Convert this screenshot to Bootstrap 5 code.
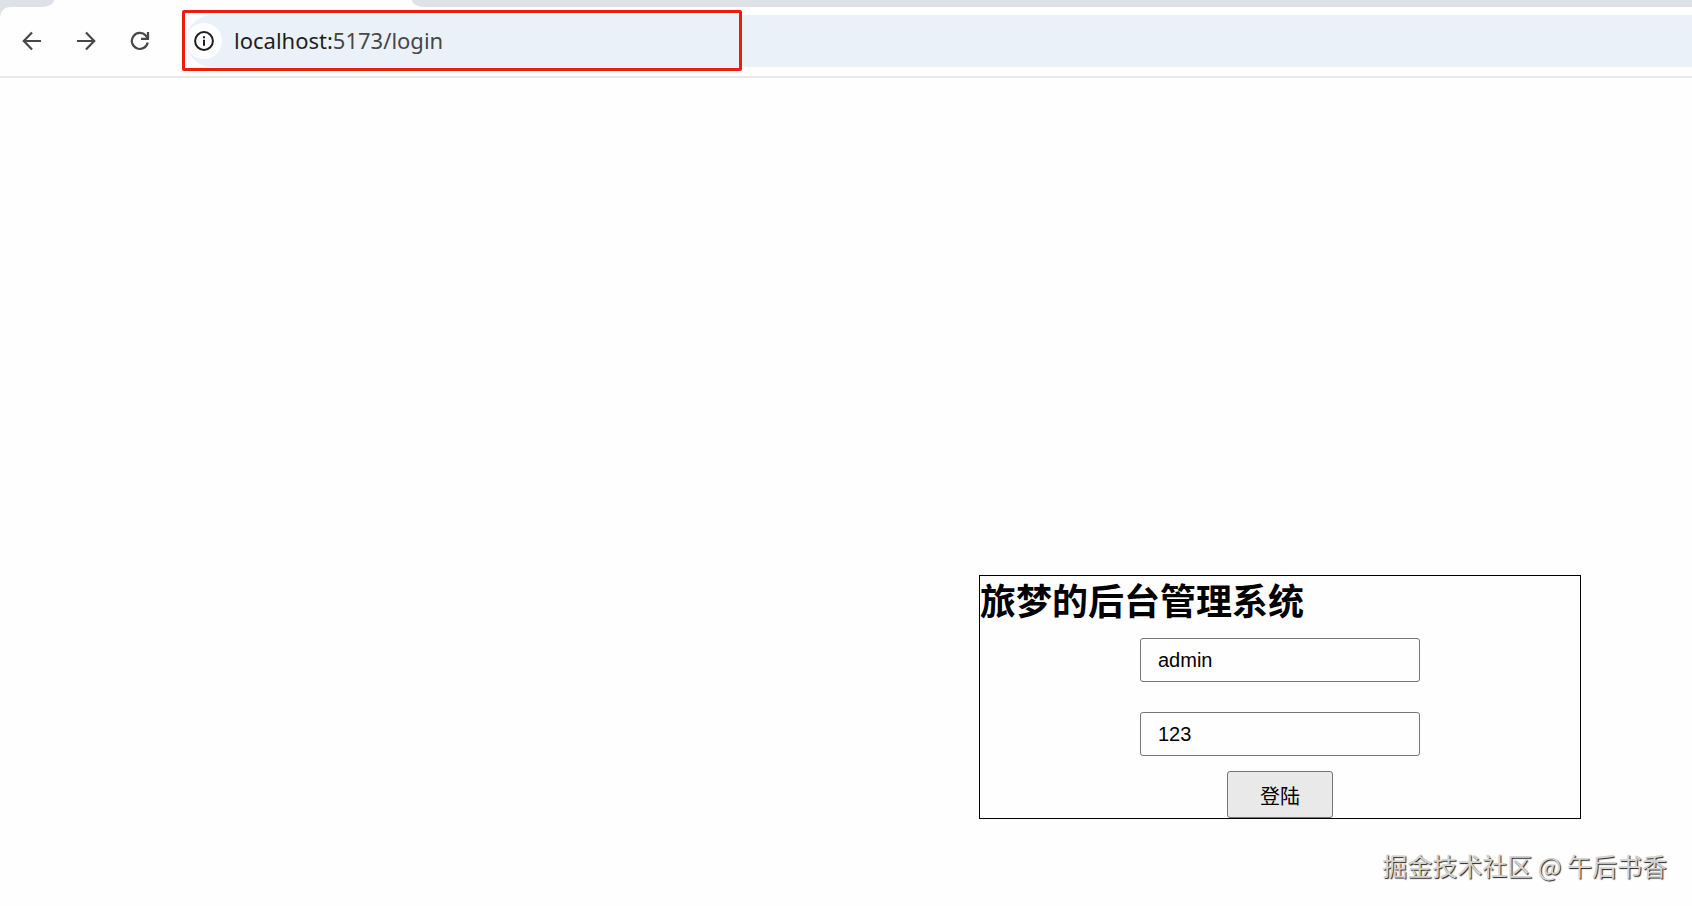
<!DOCTYPE html>
<html lang="zh-CN">
<head>
<meta charset="utf-8">
<meta name="viewport" content="width=device-width, initial-scale=1">
<title>login</title>
<link href="https://cdn.jsdelivr.net/npm/bootstrap@5.3.0/dist/css/bootstrap.min.css" rel="stylesheet">
<style>
  body { background: #fefefe; color: #000; font-family: "Liberation Sans", "Noto Sans CJK SC", sans-serif; }
  /* browser frame */
  .tab-strip { height: 7px; background: #fefefe; }
  .tab-rest { background: #dde1e8; }
  .tab-rest-start { width: 54px; border-bottom-right-radius: 12px 7px; }
  .tab-rest-end { border-bottom-left-radius: 12px 7px; }
  .tab-active { width: 358px; }
  .frame-top { background: #dde1e8; }
  .toolbar { height: 71px; padding-bottom: 1px; background: #fefefe; border-bottom: 2px solid #e8e9eb; border-top-left-radius: 10px; }
  .nav-icons { width: 182px; padding-left: 16px; gap: 22px; }
  .nav-icons .btn { width: 32px; height: 32px; color: #474747; }
  .address { height: 52px; background: #ebf1f9; border-radius: 26px 0 0 26px; margin-left: 4px; }
  .highlight { width: 560px; height: 61px; left: 182px; top: 3px; border: 3px solid #ec1c0f; border-radius: 2px; pointer-events: none; }
  .site-info { width: 36px; height: 36px; background: #fefefe; color: #1f1f1f; }
  .url-text { margin-left: 12px; padding-bottom: 2px; font: 22px/30px "Noto Sans", sans-serif; color: #474747; }
  .url-text span { color: #1f1f1f; }
  /* login panel */
  .page { padding: 0 111px 87px 0; }
  .login-box { width: 602px; border: 1px solid #000; }
  .login-title { font-size: 36px; line-height: 54px; font-weight: 700; margin-bottom: 8px; }
  .field { width: 280px; height: 44px; padding: 0 17px; border: 1px solid #767676; border-radius: 3px; font-size: 20px; line-height: 24px; color: #000; background: #fefefe; }
  .field-gap { margin-bottom: 30px; }
  .submit-btn { width: 106px; height: 47px; margin-top: 15px; padding: 4px 0 0; border: 1px solid #767676; border-radius: 3px; background: #e9e9e9; color: #000; font-size: 20px; line-height: 24px; }
  .watermark { right: 25px; bottom: 23px; font: 25px/36px "Noto Sans CJK SC", sans-serif; color: #d4d4d4; text-shadow: 1px 1px 1px #222; }
</style>
</head>
<body class="d-flex flex-column min-vh-100 position-relative">
<header class="frame-top">
  <div class="tab-strip d-flex">
    <div class="tab-rest tab-rest-start"></div>
    <div class="tab-active"></div>
    <div class="tab-rest tab-rest-end flex-grow-1"></div>
  </div>
  <div class="toolbar d-flex align-items-center position-relative">
    <nav class="nav-icons d-flex flex-shrink-0" aria-label="导航">
      <button type="button" class="btn border-0 p-0 d-flex align-items-center justify-content-center" aria-label="后退">
        <svg width="20" height="20" viewBox="0 0 20 20" fill="none" stroke="currentColor" stroke-width="2.200"><path d="M19 10H2M10 1.500 1.800 10l8.200 8.500"/></svg>
      </button>
      <button type="button" class="btn border-0 p-0 d-flex align-items-center justify-content-center" aria-label="前进">
        <svg width="20" height="20" viewBox="0 0 20 20" fill="none" stroke="currentColor" stroke-width="2.200"><path d="M1 10h17M10 1.500 18.200 10 10 18.500"/></svg>
      </button>
      <button type="button" class="btn border-0 p-0 d-flex align-items-center justify-content-center" aria-label="重新加载">
        <svg width="20" height="20" viewBox="0 0 20 20" fill="none" stroke="currentColor" stroke-width="2.200"><path d="M17.700 11.500A8 8 0 1 1 15.800 4.600L17.300 6.500M18 1v6.900h-7"/></svg>
      </button>
    </nav>
    <div class="address d-flex align-items-center flex-grow-1">
      <button type="button" class="site-info btn border-0 rounded-circle p-0 d-flex align-items-center justify-content-center" aria-label="网站信息">
        <svg width="20" height="20" viewBox="0 0 20 20" fill="none" stroke="currentColor" stroke-width="2"><circle cx="10" cy="10" r="8.900"/><path d="M10 8.700v6M10 5.200v2"/></svg>
      </button>
      <div class="url-text" role="textbox" aria-label="地址" contenteditable="true" spellcheck="false"><span>localhost:</span>5173/login</div>
    </div>
    <div class="highlight position-absolute"></div>
  </div>
</header>
<main class="page flex-grow-1 d-flex align-items-end justify-content-end">
  <form class="login-box d-flex flex-column align-items-center">
    <h1 class="login-title align-self-start">旅梦的后台管理系统</h1>
    <input class="field field-gap" type="text" value="admin" aria-label="用户名">
    <input class="field" type="text" value="123" aria-label="密码">
    <button class="submit-btn" type="button">登陆</button>
  </form>
</main>
<div class="watermark position-absolute">掘金技术社区 @ 午后书香</div>
<script src="https://cdn.jsdelivr.net/npm/bootstrap@5.3.0/dist/js/bootstrap.bundle.min.js"></script>
</body>
</html>
